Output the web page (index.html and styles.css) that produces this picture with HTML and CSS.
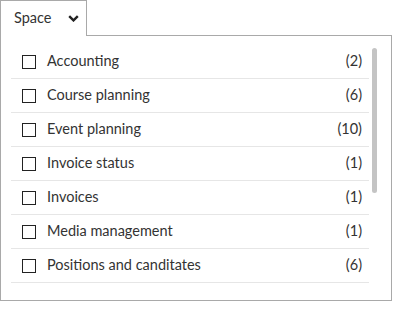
FILE: index.html
```html
<!DOCTYPE html>
<html lang="en">
<head>
  <meta charset="UTF-8" />
  <title>Space filter</title>
  <link rel="stylesheet" href="styles.css">
</head>
<body>
  <div class="filter">
    <div class="tab">
      <span class="tab-label">Space</span>
      <svg class="chevron" width="11" height="7" viewBox="0 0 11 7">
        <path d="M1.2 1.2 L5.5 5.4 L9.8 1.2" fill="none" stroke="#222" stroke-width="2.4" />
      </svg>
    </div>
    <div class="panel">
      <ul class="list">
        <li class="row"><span class="box"></span><span class="name">Accounting</span><span class="count">(2)</span></li>
        <li class="row"><span class="box"></span><span class="name">Course planning</span><span class="count">(6)</span></li>
        <li class="row"><span class="box"></span><span class="name">Event planning</span><span class="count">(10)</span></li>
        <li class="row"><span class="box"></span><span class="name">Invoice status</span><span class="count">(1)</span></li>
        <li class="row"><span class="box"></span><span class="name">Invoices</span><span class="count">(1)</span></li>
        <li class="row"><span class="box"></span><span class="name">Media management</span><span class="count">(1)</span></li>
        <li class="row"><span class="box"></span><span class="name">Positions and canditates</span><span class="count">(6)</span></li>
      </ul>
      <div class="scroll"><div class="thumb"></div></div>
    </div>
  </div>
</body>
</html>
```

FILE: styles.css
```css
body {
  margin: 0;
  background: #fff;
  color: #333;
  font-family: Lato, sans-serif;
  font-size: 14.5px;
}
.filter {
  width: 392px;
}
.tab {
  position: relative;
  z-index: 1;
  box-sizing: border-box;
  width: 87px;
  height: 36px;
  margin-bottom: -1px;
  padding: 0 0 0 13px;
  display: flex;
  align-items: center;
  background: #fff;
  border: 1px solid #a9a9a9;
  border-bottom: none;
}
.tab-label {
  flex: 1;
  padding-bottom: 2px;
}
.chevron {
  margin-right: 7px;
}
.panel {
  box-sizing: border-box;
  display: flex;
  height: 266px;
  padding: 9px 14px 17px 10px;
  border: 1px solid #a9a9a9;
}
.list {
  list-style: none;
  margin: 0;
  padding: 0;
  width: 358px;
  height: 238px;
}
.row {
  display: flex;
  align-items: center;
  height: 33px;
  padding: 0 7px 0 11px;
  border-bottom: 1px solid #e6e6e6;
}
.box {
  box-sizing: border-box;
  width: 14px;
  height: 14px;
  margin-right: 11px;
  border: 1px solid #222;
}
.name {
  flex: 1;
  padding-bottom: 3px;
}
.count {
  padding-bottom: 3px;
}
.scroll {
  margin-left: 3px;
  width: 5px;
}
.thumb {
  margin-top: 3px;
  height: 145px;
  background: #c4c4c4;
  border-radius: 3px;
}
```
